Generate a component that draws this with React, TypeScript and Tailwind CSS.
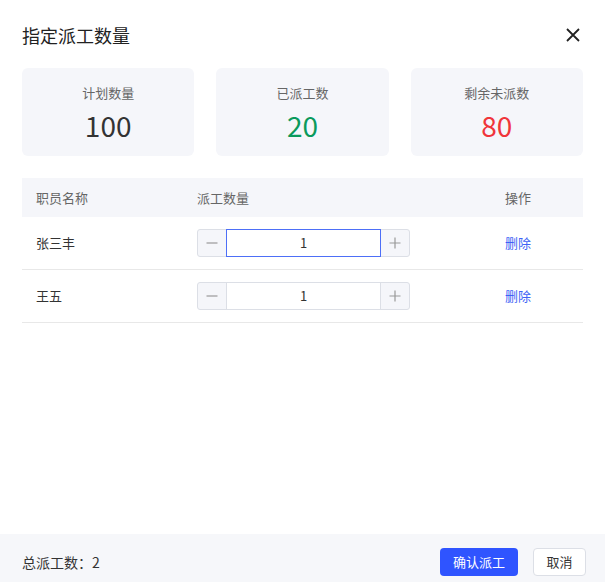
import React from 'react'

const font = { fontFamily: '"Noto Sans CJK SC", "Noto Sans", sans-serif' }

const StatCard: React.FC<{ label: string; value: string; color: string }> = ({ label, value, color }) => (
  <div className="h-[88px] rounded-md bg-[#f5f6fa] flex flex-col items-center pt-[16px]">
    <div className="text-[13px] leading-[18px] text-[#666]">{label}</div>
    <div className={`mt-[6px] text-[28px] leading-[34px] ${color}`}>{value}</div>
  </div>
)

const Stepper: React.FC<{ focused?: boolean }> = ({ focused }) => (
  <div className="flex h-[28px] w-[213px] rounded-[3px] border border-[#dcdfe6] bg-[#f5f6fa]">
    <button className="w-[28px] flex items-center justify-center text-[#999]">
      <svg width="12" height="12" viewBox="0 0 12 12"><path d="M0.5 6h11" stroke="currentColor" strokeWidth="1.2" /></svg>
    </button>
    <div
      className={`flex-1 flex items-center justify-center bg-white text-[13px] text-[#333] ${
        focused ? 'border border-[#4d6ff7] -my-px' : 'border-x border-[#dcdfe6]'
      }`}
    >
      1
    </div>
    <button className="w-[28px] flex items-center justify-center text-[#999]">
      <svg width="12" height="12" viewBox="0 0 12 12"><path d="M0.5 6h11M6 0.5v11" stroke="currentColor" strokeWidth="1.2" /></svg>
    </button>
  </div>
)

const Row: React.FC<{ name: string; focused?: boolean }> = ({ name, focused }) => (
  <div className="flex items-center h-[53px] border-b border-[#e8e8e8] pl-[14px] text-[13px]">
    <div className="w-[161px] text-[#333]">{name}</div>
    <div className="w-[308px]">
      <Stepper focused={focused} />
    </div>
    <div className="text-[#3d63f5]">删除</div>
  </div>
)

export default function App() {
  return (
    <div className="w-[605px] h-[582px] flex flex-col bg-white" style={font}>
      <div className="flex items-center justify-between px-[22px] pt-[24px] h-[46px]">
        <h1 className="text-[18px] leading-[22px] text-[#222]">指定派工数量</h1>
        <svg width="16" height="16" viewBox="0 0 16 16" className="mr-[2px]">
          <path d="M2 2l12 12M14 2L2 14" stroke="#222" strokeWidth="1.8" />
        </svg>
      </div>

      <div className="grid grid-cols-3 gap-[22px] px-[22px] mt-[22px]">
        <StatCard label="计划数量" value="100" color="text-[#333]" />
        <StatCard label="已派工数" value="20" color="text-[#0a9a5c]" />
        <StatCard label="剩余未派数" value="80" color="text-[#f0353a]" />
      </div>

      <div className="mx-[22px] mt-[22px]">
        <div className="flex items-center h-[39px] bg-[#f5f6fa] pl-[14px] text-[13px] text-[#666]">
          <div className="w-[161px]">职员名称</div>
          <div className="w-[308px]">派工数量</div>
          <div>操作</div>
        </div>
        <Row name="张三丰" focused />
        <Row name="王五" />
      </div>

      <div className="mt-auto h-[48px] bg-[#f6f7fa] flex items-center justify-between px-[22px] pt-[8px]">
        <div className="text-[14px] text-[#333]">总派工数：2</div>
        <div className="flex gap-[15px] mr-[-3px]">
          <button className="h-[28px] w-[78px] rounded-[4px] bg-[#2f54ff] text-white text-[13px]">确认派工</button>
          <button className="h-[28px] w-[53px] rounded-[4px] bg-white border border-[#dcdfe6] text-[#333] text-[13px]">取消</button>
        </div>
      </div>
    </div>
  )
}
